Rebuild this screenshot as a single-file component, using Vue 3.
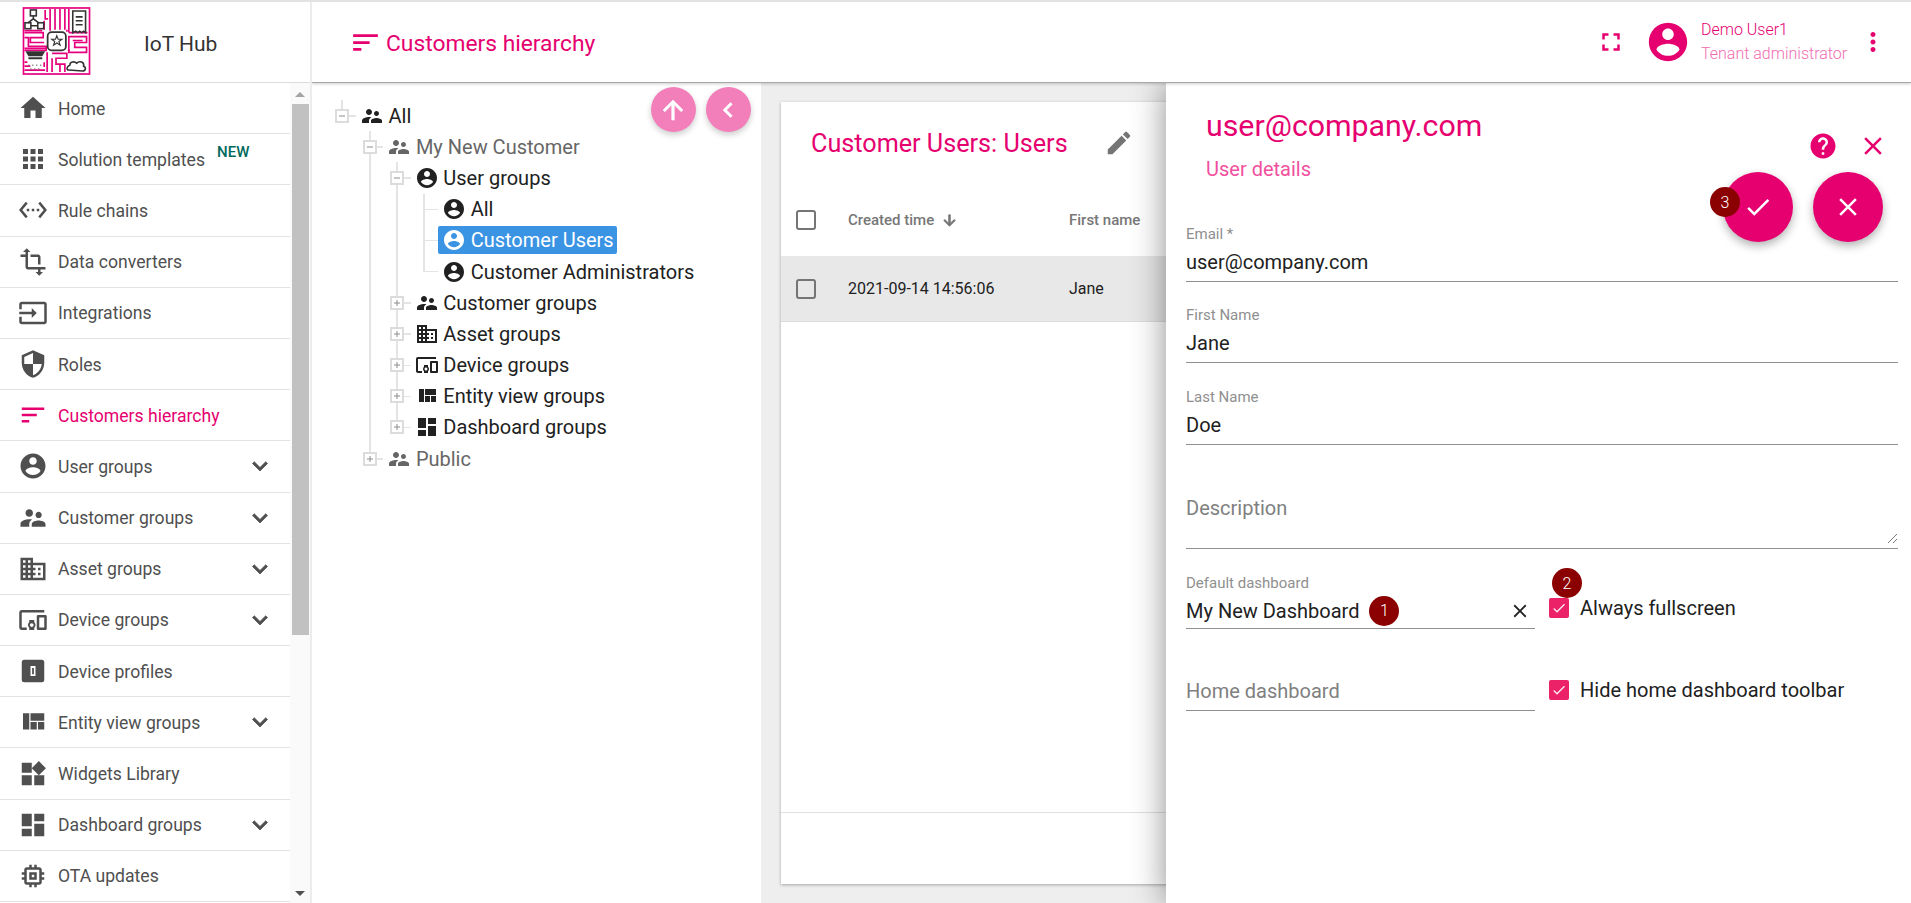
<script setup>
const P = {
  home: 'M10 20v-6h4v6h5v-8h3L12 3 2 12h3v8z',
  apps: 'M4 8h4V4H4v4zm6 12h4v-4h-4v4zm-6 0h4v-4H4v4zm0-6h4v-4H4v4zm6 0h4v-4h-4v4zm6-10v4h4V4h-4zm-6 4h4V4h-4v4zm6 6h4v-4h-4v4zm0 6h4v-4h-4v4z',
  rule: 'M7.77 6.76L6.23 5.48.82 12l5.41 6.52 1.54-1.28L3.42 12l4.35-5.24zM7 13h2v-2H7v2zm10-2h-2v2h2v-2zm-6 2h2v-2h-2v2zm6.77-7.52l-1.54 1.28L20.58 12l-4.35 5.24 1.54 1.28L23.18 12l-5.41-6.52z',
  transform: 'M22 18v-2H8V4h2L7 1 4 4h2v2H2v2h4v8c0 1.1.9 2 2 2h8v2h-2l3 3 3-3h-2v-2h4zM10 8h6v6h2V8c0-1.1-.9-2-2-2h-6v2z',
  input: 'M21 3.01H3c-1.1 0-2 .9-2 2V9h2V4.99h18v14.03H3V15H1v4.01c0 1.1.9 1.98 2 1.98h18c1.1 0 2-.88 2-1.98v-14c0-1.11-.9-2-2-2zM11 16l4-4-4-4v3H1v2h10v3z',
  security: 'M12 1L3 5v6c0 5.55 3.84 10.74 9 12 5.16-1.26 9-6.45 9-12V5l-9-4zm0 10.99h7c-.53 4.12-3.28 7.79-7 8.94V12H5V6.3l7-3.11v8.8z',
  sort: 'M3 18h6v-2H3v2zM3 6v2h18V6H3zm0 7h12v-2H3v2z',
  account: 'M12 2C6.48 2 2 6.48 2 12s4.48 10 10 10 10-4.48 10-10S17.52 2 12 2zm0 3c1.66 0 3 1.34 3 3s-1.34 3-3 3-3-1.34-3-3 1.34-3 3-3zm0 14.2c-2.5 0-4.71-1.28-6-3.22.03-1.99 4-3.08 6-3.08 1.99 0 5.97 1.09 6 3.08-1.29 1.94-3.5 3.22-6 3.22z',
  supervisor: 'M16.5 12c1.38 0 2.49-1.12 2.49-2.5S17.88 7 16.5 7C15.12 7 14 8.12 14 9.5s1.12 2.5 2.5 2.5zM9 11c1.66 0 2.99-1.34 2.99-3S10.66 5 9 5C7.34 5 6 6.34 6 8s1.34 3 3 3zm7.5 3c-1.83 0-5.5.92-5.5 2.75V19h11v-2.25c0-1.83-3.67-2.75-5.5-2.75zM9 13c-2.33 0-7 1.17-7 3.5V19h7v-2.25c0-.85.33-2.34 2.37-3.47C10.5 13.1 9.66 13 9 13z',
  domain: 'M12 7V3H2v18h20V7H12zM6 19H4v-2h2v2zm0-4H4v-2h2v2zm0-4H4V9h2v2zm0-4H4V5h2v2zm4 12H8v-2h2v2zm0-4H8v-2h2v2zm0-4H8V9h2v2zm0-4H8V5h2v2zm10 12h-8v-2h2v-2h-2v-2h2v-2h-2V9h8v10zm-2-8h-2v2h2v-2zm0 4h-2v2h2v-2z',
  devices: 'M3 6h18V4H3c-1.1 0-2 .9-2 2v12c0 1.1.9 2 2 2h4v-2H3V6zm10 6H9v1.78c-.61.55-1 1.33-1 2.22s.39 1.67 1 2.22V20h4v-1.78c.61-.55 1-1.34 1-2.22s-.39-1.67-1-2.22V12zm-2 5.5c-.83 0-1.5-.67-1.5-1.5s.67-1.5 1.5-1.5 1.5.67 1.5 1.5-.67 1.5-1.5 1.5zM22 8h-6c-.5 0-1 .5-1 1v10c0 .5.5 1 1 1h6c.5 0 1-.5 1-1V9c0-.5-.5-1-1-1zm-1 10h-4v-8h4v8z',
  profile: 'M5 3h14a2 2 0 0 1 2 2v14a2 2 0 0 1-2 2H5a2 2 0 0 1-2-2V5a2 2 0 0 1 2-2zm5 5v8h4V8h-4zm1.300 1.500h1.400v5h-1.400v-5z',
  quilt: 'M10 18h5v-6h-5v6zm-6 0h5V5H4v13zm12 0h5v-6h-5v6zM10 5v6h11V5H10z',
  widgets: 'M13 13v8h8v-8h-8zM3 21h8v-8H3v8zM3 3v8h8V3H3zm13.66-1.31L11 7.34 16.66 13l5.66-5.66-5.66-5.65z',
  dashboard: 'M3 13h8V3H3v10zm0 8h8v-6H3v6zm10 0h8V11h-8v10zm0-18v6h8V3h-8z',
  memory: 'M15 9H9v6h6V9zm-2 4h-2v-2h2v2zm8-2V9h-2V7c0-1.1-.9-2-2-2h-2V3h-2v2h-2V3H9v2H7c-1.1 0-2 .9-2 2v2H3v2h2v2H3v2h2v2c0 1.1.9 2 2 2h2v2h2v-2h2v2h2v-2h2c1.1 0 2-.9 2-2v-2h2v-2h-2v-2h2zm-4 6H7V7h10v10z',
  expand: 'M16.59 8.59L12 13.17 7.41 8.59 6 10l6 6 6-6z',
  fullscreen: 'M7 14H5v5h5v-2H7v-3zm-2-4h2V7h3V5H5v5zm12 7h-3v2h5v-5h-2v3zM14 5v2h3v3h2V5h-5z',
  more: 'M12 8c1.1 0 2-.9 2-2s-.9-2-2-2-2 .9-2 2 .9 2 2 2zm0 2c-1.1 0-2 .9-2 2s.9 2 2 2 2-.9 2-2-.9-2-2-2zm0 6c-1.1 0-2 .9-2 2s.9 2 2 2 2-.9 2-2-.9-2-2-2z',
  help: 'M12 2C6.48 2 2 6.48 2 12s4.48 10 10 10 10-4.48 10-10S17.52 2 12 2zm1 17h-2v-2h2v2zm2.07-7.75l-.9.92C13.45 12.9 13 13.5 13 15h-2v-.5c0-1.1.45-2.1 1.17-2.83l1.24-1.26c.37-.36.59-.86.59-1.41 0-1.1-.9-2-2-2s-2 .9-2 2H8c0-2.21 1.79-4 4-4s4 1.79 4 4c0 .88-.36 1.68-.93 2.25z',
  close: 'M19 6.41L17.59 5 12 10.59 6.41 5 5 6.41 10.59 12 5 17.59 6.41 19 12 13.41 17.59 19 19 17.59 13.41 12z',
  check: 'M9 16.17L4.83 12l-1.42 1.41L9 19 21 7l-1.41-1.41z',
  edit: 'M3 17.25V21h3.75L17.81 9.94l-3.75-3.75L3 17.25zM20.71 7.04c.39-.39.39-1.02 0-1.41l-2.34-2.34c-.39-.39-1.02-.39-1.41 0l-1.83 1.83 3.75 3.75 1.83-1.83z',
  up: 'M4 12l1.41 1.41L11 7.83V20h2V7.83l5.58 5.59L20 12l-8-8-8 8z',
  left: 'M15.41 7.41L14 6l-6 6 6 6 1.41-1.41L10.83 12z',
  down: 'M20 12l-1.41-1.41L13 16.17V4h-2v12.17l-5.58-5.59L4 12l8 8 8-8z'
}

const menu = [
  { icon: 'home', label: 'Home' },
  { icon: 'apps', label: 'Solution templates', badge: 'NEW' },
  { icon: 'rule', label: 'Rule chains' },
  { icon: 'transform', label: 'Data converters' },
  { icon: 'input', label: 'Integrations' },
  { icon: 'security', label: 'Roles' },
  { icon: 'sort', label: 'Customers hierarchy', active: true },
  { icon: 'account', label: 'User groups', more: true },
  { icon: 'supervisor', label: 'Customer groups', more: true },
  { icon: 'domain', label: 'Asset groups', more: true },
  { icon: 'devices', label: 'Device groups', more: true },
  { icon: 'profile', label: 'Device profiles' },
  { icon: 'quilt', label: 'Entity view groups', more: true },
  { icon: 'widgets', label: 'Widgets Library' },
  { icon: 'dashboard', label: 'Dashboard groups', more: true },
  { icon: 'memory', label: 'OTA updates' }
]

// cells: one 27.4px guide column per level; toggle marks the expand box of the row
const tree = [
  { cells: ['stub h'], toggle: 'minus', icon: 'supervisor', label: 'All' },
  { cells: ['', 'v h'], toggle: 'minus', icon: 'supervisor', label: 'My New Customer', muted: true },
  { cells: ['', 'v', 'v h'], toggle: 'minus', icon: 'account', label: 'User groups' },
  { cells: ['', 'v', 'v', 'v h'], icon: 'account', label: 'All' },
  { cells: ['', 'v', 'v', 'v h'], icon: 'account', label: 'Customer Users', selected: true },
  { cells: ['', 'v', 'v', 'stub h'], icon: 'account', label: 'Customer Administrators' },
  { cells: ['', 'v', 'v h'], toggle: 'plus', icon: 'supervisor', label: 'Customer groups' },
  { cells: ['', 'v', 'v h'], toggle: 'plus', icon: 'domain', label: 'Asset groups' },
  { cells: ['', 'v', 'v h'], toggle: 'plus', icon: 'devices', label: 'Device groups' },
  { cells: ['', 'v', 'v h'], toggle: 'plus', icon: 'quilt', label: 'Entity view groups' },
  { cells: ['', 'v', 'stub h'], toggle: 'plus', icon: 'dashboard', label: 'Dashboard groups' },
  { cells: ['', 'stub h'], toggle: 'plus', icon: 'supervisor', label: 'Public', muted: true }
]

const fields = [
  { label: 'Email *', value: 'user@company.com', cls: 'f-email' },
  { label: 'First Name', value: 'Jane', cls: 'f-first' },
  { label: 'Last Name', value: 'Doe', cls: 'f-last' }
]
</script>

<template>
  <div class="page">
    <aside class="side">
      <div class="brand">
        <svg class="logo" viewBox="0 0 69 69">
          <rect width="69" height="69" fill="#fff" />
          <g fill="none" stroke="#e6007e" stroke-width="1.700">
            <rect x="1" y="1" width="67" height="67" />
            <path d="M23 3v9h3M28 2v22M33 2v21M38 2v21M43 2v21M47 2v24M2 26h19v5H8v5h14M2 31h4v9h20M2 44h22v-4M47 30h18v6H53v5h12v5H47zM51 34h10M47 26h19M45 23v2" />
            <path d="M25 46v20M30 47h15v5H34v6h9v8M30 52v14M38 58v8M2 56h3M2 60h6M2 64h21M22 56v5M45 47v2M46 44h2" />
            <path d="M2 24h18M22 14v9M2 42h22" />
          </g>
          <g fill="none" stroke="#333" stroke-width="1.600">
            <rect x="8" y="3" width="6" height="6" />
            <rect x="2.500" y="16" width="6" height="6" />
            <rect x="15.500" y="16" width="6" height="6" />
            <path d="M11 9v4M5.500 16l5.500-4 5.500 4M8.500 19h7" />
            <path d="M51 4h13v22l-2-1.500-2 1.500-2-1.500-2 1.500-2-1.500-3 1.500z" />
            <path d="M54 10h7M54 14h7M54 18h7" />
            <rect x="25.500" y="25.500" width="18.500" height="18.500" rx="4" stroke-width="1.800" />
            <path d="M34.800 29l1.300 3.700h4l-3.200 2.300 1.300 3.800-3.400-2.300-3.300 2.300 1.200-3.800-3.100-2.300h3.900z" stroke-width="1.100" />
            <path d="M47 64c-3 0-2-4 1-5 0-4 5-4 7-2 3-3 8-1 7 3 3 1 2 5-1 5z" />
          </g>
          <path d="M3 45h20l-3 5H6z" fill="#333" />
          <path d="M6 52h14" stroke="#333" stroke-width="2" />
          <path d="M6 59h1M10 59h1M14 59h1M18 59h1M8 63h1M12 63h1M16 63h1" stroke="#666" stroke-width="1.500" />
        </svg>
        <span class="brand-name">IoT Hub</span>
      </div>
      <div class="side-body">
        <nav class="menu">
          <a v-for="m in menu" :key="m.label" class="item" :class="{ active: m.active }">
            <svg class="item-icon" viewBox="0 0 24 24"><path :d="P[m.icon]" fill="currentColor" /></svg>
            <span class="item-label">{{ m.label }}</span>
            <sup v-if="m.badge" class="new">{{ m.badge }}</sup>
            <svg v-if="m.more" class="chev" viewBox="0 0 24 24"><path :d="P.expand" fill="currentColor" stroke="currentColor" stroke-width=".6" /></svg>
          </a>
        </nav>
        <div class="scroll">
          <span class="arrow arrow-up"></span>
          <span class="thumb"></span>
          <span class="arrow arrow-down"></span>
        </div>
      </div>
    </aside>

    <div class="main">
      <header class="topbar">
        <svg class="top-sort" viewBox="0 0 24 24"><path :d="P.sort" fill="currentColor" /></svg>
        <h1 class="top-title">Customers hierarchy</h1>
        <svg class="top-full" viewBox="0 0 24 24"><path :d="P.fullscreen" fill="currentColor" /></svg>
        <svg class="avatar" viewBox="0 0 24 24"><path :d="P.account" fill="currentColor" /></svg>
        <div class="who">
          <div class="who-name">Demo User1</div>
          <div class="who-role">Tenant administrator</div>
        </div>
        <svg class="top-more" viewBox="0 0 24 24"><path :d="P.more" fill="currentColor" /></svg>
      </header>

      <div class="content">
        <section class="tree">
          <div class="tree-fabs">
            <button class="mini"><svg viewBox="0 0 24 24"><path :d="P.up" fill="#fff" stroke="#fff" stroke-width=".5" /></svg></button>
            <button class="mini"><svg viewBox="0 0 24 24"><path :d="P.left" fill="#fff" stroke="#fff" stroke-width=".5" /></svg></button>
          </div>
          <div v-for="(r, i) in tree" :key="i" class="row" :class="{ muted: r.muted }">
            <span v-for="(c, j) in r.cells" :key="j" class="cell" :class="c">
              <svg v-if="r.toggle && j === r.cells.length - 1" class="box" viewBox="0 0 14 14">
                <rect x="1" y="1" width="12" height="12" fill="#fff" stroke="#dcdcdc" stroke-width="2" />
                <path :d="r.toggle === 'minus' ? 'M4 7h6' : 'M4 7h6M7 4v6'" stroke="#8c8c8c" stroke-width="1" />
              </svg>
            </span>
            <span class="node" :class="{ sel: r.selected }">
              <svg class="node-icon" viewBox="0 0 24 24"><path :d="P[r.icon]" fill="currentColor" /></svg>
              <span>{{ r.label }}</span>
            </span>
          </div>
        </section>

        <section class="right">
          <div class="card">
            <div class="card-head">
              <h2 class="card-title">Customer Users: Users</h2>
              <svg class="card-edit" viewBox="0 0 24 24"><path :d="P.edit" fill="currentColor" /></svg>
            </div>
            <div class="t-row t-head">
              <span class="cb"></span>
              <span class="c-time">Created time
                <svg class="sort-arrow" viewBox="0 0 24 24"><path :d="P.down" fill="currentColor" stroke="currentColor" stroke-width="1.400" /></svg>
              </span>
              <span>First name</span>
            </div>
            <div class="t-row t-data">
              <span class="cb"></span>
              <span class="c-time">2021-09-14 14:56:06</span>
              <span>Jane</span>
            </div>
            <div class="t-space"></div>
            <div class="t-foot"></div>
          </div>

          <aside class="panel">
            <div class="p-head">
              <div class="p-titles">
                <h2 class="p-title">user@company.com</h2>
                <div class="p-sub">User details</div>
              </div>
              <svg class="p-help" viewBox="0 0 24 24"><path :d="P.help" fill="currentColor" /></svg>
              <svg class="p-close" viewBox="0 0 24 24"><path :d="P.close" fill="currentColor" /></svg>
            </div>
            <div class="fabs">
              <button class="fab">
                <svg viewBox="0 0 24 24"><path :d="P.check" fill="#fff" /></svg>
                <span class="badge badge-3">3</span>
              </button>
              <button class="fab"><svg viewBox="0 0 24 24"><path :d="P.close" fill="#fff" /></svg></button>
            </div>

            <div v-for="f in fields" :key="f.label" class="field" :class="f.cls">
              <label class="f-label">{{ f.label }}</label>
              <div class="f-value">{{ f.value }}</div>
            </div>

            <div class="field f-desc">
              <div class="f-value f-ph">Description</div>
              <svg class="resize" viewBox="0 0 12 12"><path d="M11 2L2 11M11 7l-4 4" stroke="#777" stroke-width="1" /></svg>
            </div>

            <div class="split split-1">
              <div class="field f-dash">
                <label class="f-label">Default dashboard</label>
                <div class="f-value f-with-x">
                  <span>My New Dashboard</span>
                  <span class="badge badge-1">1</span>
                  <svg class="f-x" viewBox="0 0 24 24"><path :d="P.close" fill="currentColor" /></svg>
                </div>
              </div>
              <div class="check">
                <span class="tick">
                  <svg viewBox="0 0 24 24"><path :d="P.check" fill="#fff" /></svg>
                  <span class="badge badge-2">2</span>
                </span>
                <span>Always fullscreen</span>
              </div>
            </div>

            <div class="split split-2">
              <div class="field f-home">
                <div class="f-value f-ph">Home dashboard</div>
              </div>
              <div class="check">
                <span class="tick"><svg viewBox="0 0 24 24"><path :d="P.check" fill="#fff" /></svg></span>
                <span>Hide home dashboard toolbar</span>
              </div>
            </div>
          </aside>
        </section>
      </div>
    </div>
  </div>
</template>

<style scoped>
.page {
  display: flex;
  width: 1911px;
  height: 903px;
  overflow: hidden;
  box-sizing: border-box;
  border-top: 2px solid #e2e2e2;
  font-family: Roboto, "Liberation Sans", sans-serif;
  color: #212121;
  background: #fff;
}
h1, h2 { margin: 0; font-weight: 400; }
button { border: 0; padding: 0; font: inherit; }

/* sidebar */
.side {
  width: 312px;
  flex: none;
  display: flex;
  flex-direction: column;
  box-sizing: border-box;
  border-right: 2px solid #ececec;
  position: relative;
  z-index: 3;
  background: #fff;
}
.brand {
  height: 81px;
  flex: none;
  box-sizing: border-box;
  border-bottom: 1px solid #dcdcdc;
  display: flex;
  align-items: center;
  padding-left: 22px;
}
.logo { width: 69px; height: 68px; margin-top: -2px; }
.brand-name { margin-left: 53px; font-size: 21px; color: #333; margin-top: 3px; }
.side-body { flex: 1; display: flex; min-height: 0; }
.menu { width: 290px; flex: none; }
.item {
  height: 51.2px;
  box-sizing: border-box;
  border-bottom: 1.5px solid #e2e2e2;
  display: flex;
  align-items: center;
  padding-left: 18px;
  color: #4f4f4f;
  font-size: 17.6px;
}
.item.active { color: #e6006f; }
.item-icon { width: 30px; height: 30px; flex: none; margin-right: 10px; }
.item-label { white-space: nowrap; margin-top: 1px; }
.new {
  font-size: 15px;
  font-weight: 500;
  color: #00695c;
  margin: -13px 0 0 12px;
  line-height: 1;
}
.chev { width: 30px; height: 30px; margin-left: auto; margin-right: 15px; }
.scroll {
  width: 20px;
  display: flex;
  flex-direction: column;
  align-items: center;
  background: #fafafa;
}
.thumb { width: 17px; height: 531px; background: #c1c1c1; }
.arrow { width: 0; height: 0; border-left: 5px solid transparent; border-right: 5px solid transparent; }
.arrow-up { border-bottom: 5px solid #a3a3a3; margin: 9px 0 7px; }
.arrow-down { border-top: 5px solid #505050; margin-top: auto; margin-bottom: 7px; }

/* header */
.main { flex: 1; min-width: 0; display: flex; flex-direction: column; }
.topbar {
  height: 81px;
  flex: none;
  box-sizing: border-box;
  display: flex;
  align-items: center;
  padding-left: 37px;
  color: #e6006f;
  border-bottom: 1px solid #a8a8a8;
  box-shadow: 0 1px 3px rgba(0, 0, 0, .2);
  position: relative;
  z-index: 2;
  background: #fff;
}
.top-sort { width: 33px; height: 33px; margin-right: 4px; }
.top-title { font-size: 22.800px; flex: 1; margin-top: 2px; }
.top-full { width: 30px; height: 30px; margin-right: 19px; }
.avatar { width: 46px; height: 46px; margin-right: 10px; }
.who { font-size: 16px; font-weight: 300; line-height: 24px; width: 157px; }
.who-role { color: #f06cb0; }
.top-more { width: 30px; height: 30px; margin-right: 23px; }

/* tree */
.content { flex: 1; display: flex; min-height: 0; }
.tree {
  width: 449px;
  flex: none;
  box-sizing: border-box;
  padding: 17px 0 0 16.6px;
  position: relative;
  background: #fff;
}
.tree-fabs {
  position: absolute;
  top: 4px;
  left: 338.500px;
  display: flex;
  gap: 10px;
}
.mini {
  width: 45px;
  height: 45px;
  border-radius: 50%;
  background: #f27fba;
  box-shadow: 0 3px 6px rgba(0, 0, 0, .2);
  display: flex;
  align-items: center;
  justify-content: center;
}
.mini svg { width: 30px; height: 30px; }
.row {
  height: 31.2px;
  display: flex;
  align-items: center;
  font-size: 20px;
  color: #212121;
  white-space: nowrap;
}
.row.muted { color: #666; }
.cell { width: 27.4px; height: 100%; flex: none; position: relative; display: flex; align-items: center; justify-content: center; }
.cell.v::before, .cell.stub::before {
  content: "";
  position: absolute;
  left: 12.700px;
  width: 2px;
  top: 0;
  background: #e4e4e4;
}
.cell.v::before { bottom: 0; }
.cell.stub::before { height: 50%; }
.cell.h::after {
  content: "";
  position: absolute;
  left: 13.700px;
  right: 0;
  height: 1.500px;
  top: 15px;
  background: #e4e4e4;
}
.box { width: 14px; height: 14px; position: relative; z-index: 1; }
.node {
  height: 28px;
  display: inline-flex;
  align-items: center;
  padding: 0 3px 0 4px;
  gap: 4.500px;
  border-radius: 2px;
}
.node.sel { background: #3a93e3; color: #fff; }
.node-icon { width: 24px; height: 24px; flex: none; }

/* table card */
.right {
  flex: 1;
  min-width: 0;
  position: relative;
  overflow: hidden;
  background: #eee;
  padding: 19px 0 0 20px;
  box-sizing: border-box;
}
.card {
  width: 1300px;
  height: 782px;
  background: #fff;
  box-shadow: 0 1px 3px rgba(0, 0, 0, .3);
  display: flex;
  flex-direction: column;
}
.card-head {
  height: 82px;
  flex: none;
  display: flex;
  align-items: center;
  padding-left: 30px;
  box-sizing: border-box;
  color: #e6006f;
}
.card-title { font-size: 25.200px; }
.card-edit { width: 30px; height: 30px; color: #757575; margin-left: 36px; }
.t-row {
  flex: none;
  display: flex;
  align-items: center;
  padding-left: 15px;
  font-size: 15px;
}
.t-head { height: 72px; color: #777; font-weight: 500; }
.t-data { height: 66px; background: #e8e8e8; color: #212121; border-bottom: 1px solid #ddd; box-sizing: border-box; font-size: 16px; }
.cb {
  width: 20px;
  height: 20px;
  box-sizing: border-box;
  border: 2px solid #757575;
  border-radius: 3px;
  flex: none;
  margin-right: 32px;
}
.c-time { width: 221px; display: flex; align-items: center; gap: 7px; }
.sort-arrow { width: 17px; height: 17px; color: #757575; }
.t-space { flex: 1; }
.t-foot { height: 71px; border-top: 1px solid #e0e0e0; flex: none; }

/* details panel */
.panel {
  position: absolute;
  top: 0;
  bottom: 0;
  left: 405px;
  right: 0;
  background: #fff;
  box-shadow: 0 0 32px rgba(0, 0, 0, .45);
  box-sizing: border-box;
  padding: 0 13px 0 20px;
}
.p-head { height: 143px; display: flex; position: relative; align-items: flex-start; }
.p-titles { padding: 21px 0 0 20px; flex: 1; }
.p-title { font-size: 30.300px; color: #e6006f; line-height: 44px; }
.p-sub { font-size: 20px; color: #f0509e; line-height: 24px; margin-top: 9px; }
.p-help { width: 30px; height: 30px; color: #e6006f; margin-top: 48px; }
.p-close { width: 30px; height: 30px; color: #e6006f; margin: 48px 10px 0 20px; }
.fabs {
  position: absolute;
  top: 89px;
  right: 28px;
  display: flex;
  gap: 20px;
}
.fab {
  width: 70px;
  height: 70px;
  border-radius: 50%;
  background: #e6006f;
  box-shadow: 0 4px 10px rgba(0, 0, 0, .3);
  display: flex;
  align-items: center;
  justify-content: center;
  position: relative;
}
.fab svg { width: 30px; height: 30px; }
.badge {
  width: 30px;
  height: 30px;
  border-radius: 50%;
  background: #8b0000;
  color: #fff;
  font-size: 16px;
  font-weight: 300;
  display: inline-flex;
  align-items: center;
  justify-content: center;
  flex: none;
}
.badge-3 { position: absolute; left: -13px; top: 15px; }
.badge-1 { margin: -2px 0 -2px 10px; }
.badge-2 { position: absolute; left: 3px; top: -30px; }

.field { border-bottom: 1px solid #8f8f8f; position: relative; padding-bottom: 6px; }
.f-label { display: block; font-size: 15px; line-height: 16px; color: #8f8f8f; margin-bottom: 7px; }
.f-value { font-size: 20px; line-height: 26px; color: #212121; }
.f-ph { color: #808080; }
.f-first { margin-top: 25px; }
.f-last { margin-top: 26px; }
.f-desc { margin-top: 50px; padding-bottom: 27px; }
.resize { position: absolute; right: 0; bottom: 4px; width: 12px; height: 12px; }
.split { display: flex; gap: 14px; }
.split-1 { margin-top: 26px; }
.split-2 { margin-top: 49px; }
.f-dash { padding-bottom: 4px; }
.f-dash, .f-home { width: 349px; flex: none; }
.f-with-x { display: flex; align-items: center; }
.f-x { width: 22px; height: 22px; margin-left: auto; margin-right: 4px; }
.check { display: flex; align-items: center; gap: 11px; font-size: 20px; height: 26px; }
.split-1 .check { margin-top: 20px; }
.split-2 .check { margin-top: -1px; }
.tick {
  width: 20px;
  height: 20px;
  border-radius: 2px;
  background: #ec2268;
  display: flex;
  align-items: center;
  justify-content: center;
  flex: none;
  position: relative;
}
.tick svg { width: 16px; height: 16px; opacity: .9; }
</style>
